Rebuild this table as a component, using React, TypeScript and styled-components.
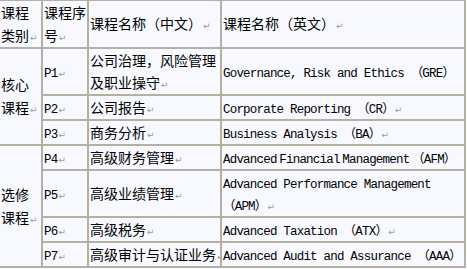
import styled, { createGlobalStyle } from "styled-components";

const GlobalStyle = createGlobalStyle`
  html, body {
    margin: 0;
    padding: 0;
    background: #ffffff;
    overflow: hidden;
  }
`;

const line = "#b4b0a2";

type Course = {
  code: string;
  cn: string;
  en: string;
  // names squeezed onto one line in the original, running into the border
  oneLine?: boolean;
};

const core: Course[] = [
  { code: "P1", cn: "公司治理，风险管理及职业操守", en: "Governance, Risk and Ethics （GRE）", oneLine: true },
  { code: "P2", cn: "公司报告", en: "Corporate Reporting （CR）" },
  { code: "P3", cn: "商务分析", en: "Business Analysis （BA）" },
];

const elective: Course[] = [
  { code: "P4", cn: "高级财务管理", en: "Advanced Financial Management （AFM）", oneLine: true },
  { code: "P5", cn: "高级业绩管理", en: "Advanced Performance Management （APM）" },
  { code: "P6", cn: "高级税务", en: "Advanced Taxation （ATX）" },
  { code: "P7", cn: "高级审计与认证业务", en: "Advanced Audit and Assurance （AAA）", oneLine: true },
];

const Return = () => <Mark>↵</Mark>;

const CourseRows = ({ group, items }: { group: string; items: Course[] }) => (
  <>
    {items.map((c, i) => (
      <tr key={c.code}>
        {i === 0 && (
          <Cell rowSpan={items.length}>
            {group}
            <Return />
          </Cell>
        )}
        <Cell>
          <En>{c.code}</En>
          <Return />
        </Cell>
        <Cell $nowrap={c.code === "P7"}>
          {c.cn}
          <Return />
        </Cell>
        <Cell $nowrap={c.oneLine}>
          <En $tight={c.code === "P4"}>{c.en}</En>
          {!c.oneLine && <Return />}
        </Cell>
      </tr>
    ))}
  </>
);

export default function App() {
  return (
    <>
      <GlobalStyle />
      <Table>
        <colgroup>
          <col style={{ width: 43 }} />
          <col style={{ width: 46 }} />
          <col style={{ width: 133 }} />
          <col style={{ width: 244 }} />
        </colgroup>
        <tbody>
          <tr>
            <Cell>
              课程类别
              <Return />
            </Cell>
            <Cell>
              课程序号
              <Return />
            </Cell>
            <Cell>
              课程名称（中文）
              <Return />
            </Cell>
            <Cell>
              课程名称（英文）
              <Return />
            </Cell>
          </tr>
          <CourseRows group="核心课程" items={core} />
          <CourseRows group="选修课程" items={elective} />
        </tbody>
      </Table>
    </>
  );
}

const Table = styled.table`
  table-layout: fixed;
  width: 466px;
  border-collapse: separate;
  border-spacing: 0;
  border-top: 1px solid ${line};
  background: #f7f9fe;
  font-family: "Noto Sans CJK SC", "Liberation Sans", sans-serif;
  font-size: 14px;
  line-height: 22.8px;
  color: #000000;
`;

const Cell = styled.td<{ $nowrap?: boolean }>`
  padding: 0 0 0 1px;
  height: 22px;
  vertical-align: middle;
  border-right: 2px solid ${line};
  border-bottom: 2px solid ${line};
  word-break: break-all;
  white-space: ${({ $nowrap }) => ($nowrap ? "nowrap" : "normal")};
  overflow: hidden;
`;

const En = styled.span<{ $tight?: boolean }>`
  font-family: "Liberation Mono", "Noto Sans CJK SC", monospace;
  font-size: 12.5px;
  letter-spacing: -0.8px;
  word-spacing: ${({ $tight }) => ($tight ? "-4px" : "0")};
  line-height: 1;
  word-break: normal;
`;

const Mark = styled.span`
  font-family: "DejaVu Sans", sans-serif;
  font-size: 9px;
  line-height: 1;
  color: #9a9a9a;
  margin-left: 1px;
`;
